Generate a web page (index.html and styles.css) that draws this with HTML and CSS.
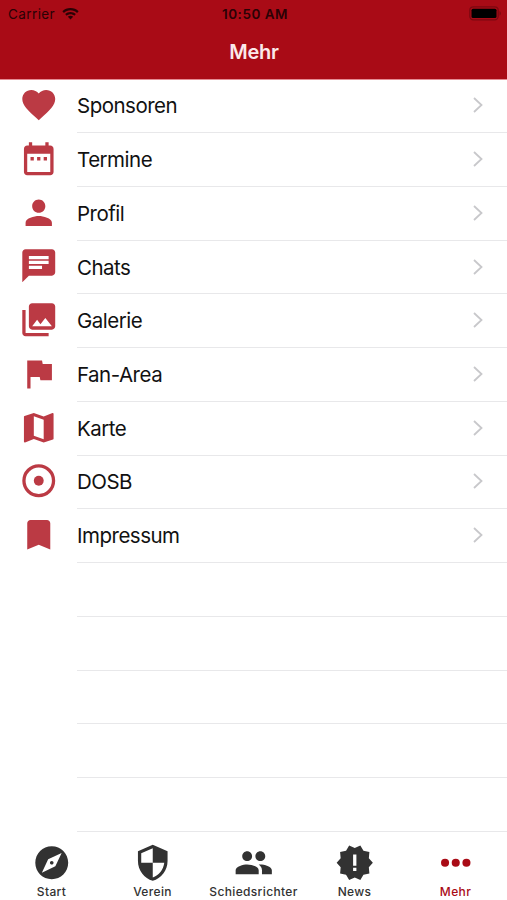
FILE: index.html
```html
<!DOCTYPE html>
<html lang="de">
<head>
<meta charset="utf-8">
<title>Mehr</title>
<link rel="stylesheet" href="styles.css">
</head>
<body>
<header class="header">
  <div class="status">
    <div class="status-left"><span class="carrier">Carrier</span>
      <svg class="wifi" viewBox="0 0 18 13"><path d="M9 0C5.600 0 2.500 1.300.200 3.500l1.700 1.800C3.800 3.500 6.300 2.500 9 2.500s5.200 1 7.100 2.800l1.700-1.800C15.500 1.300 12.400 0 9 0zM9 4.200c-2.200 0-4.300.9-5.800 2.300l1.700 1.800C6 7.300 7.400 6.700 9 6.700s3 .6 4.100 1.600l1.700-1.800C13.300 5.100 11.200 4.200 9 4.200zM9 8.300c-1.100 0-2.100.4-2.900 1.100L9 12.500l2.900-3.100C11.100 8.700 10.100 8.300 9 8.300z"/></svg>
    </div>
    <div class="clock">10:50 AM</div>
    <div class="status-right">
      <svg class="battery" viewBox="0 0 33 15"><rect class="battery-frame" x=".8" y=".8" width="28.400" height="13" rx="3.500"/><rect x="2.500" y="2.700" width="25" height="9.300" rx="1.500"/><path class="battery-tip" d="M30.500 5c1.800.8 1.800 4 0 4.800z"/></svg>
    </div>
  </div>
  <h1 class="title">Mehr</h1>
</header>
<main class="list">
  <div class="row"><svg class="icon" viewBox="0 0 24 24"><path d="M12 21.350l-1.450-1.320C5.400 15.360 2 12.280 2 8.500 2 5.420 4.420 3 7.500 3c1.740 0 3.410.81 4.500 2.090C13.090 3.810 14.760 3 16.500 3 19.580 3 22 5.420 22 8.500c0 3.780-3.400 6.860-8.550 11.540L12 21.350z"/></svg><div class="cell"><span class="label">Sponsoren</span><svg class="chevron" viewBox="0 0 10 16"><path d="M1 1l7.500 7L1 15"/></svg></div></div>
  <div class="row"><svg class="icon" viewBox="0 0 24 24"><path d="M9 11H7v2h2v-2zm4 0h-2v2h2v-2zm4 0h-2v2h2v-2zm2-7h-1V2h-2v2H8V2H6v2H5c-1.110 0-1.990.9-1.990 2L3 20c0 1.100.89 2 2 2h14c1.100 0 2-.9 2-2V6c0-1.100-.9-2-2-2zm0 16H5V9h14v11z"/></svg><div class="cell"><span class="label">Termine</span><svg class="chevron" viewBox="0 0 10 16"><path d="M1 1l7.500 7L1 15"/></svg></div></div>
  <div class="row"><svg class="icon" viewBox="0 0 24 24"><path d="M12 12c2.210 0 4-1.790 4-4s-1.790-4-4-4-4 1.790-4 4 1.790 4 4 4zm0 2c-2.670 0-8 1.340-8 4v2h16v-2c0-2.660-5.330-4-8-4z"/></svg><div class="cell"><span class="label">Profil</span><svg class="chevron" viewBox="0 0 10 16"><path d="M1 1l7.500 7L1 15"/></svg></div></div>
  <div class="row"><svg class="icon" viewBox="0 0 24 24"><path d="M20 2H4c-1.100 0-1.990.9-1.990 2L2 22l4-4h14c1.100 0 2-.9 2-2V4c0-1.100-.9-2-2-2zM6 9h12v2H6V9zm8 5H6v-2h8v2zm4-6H6V6h12v2z"/></svg><div class="cell"><span class="label">Chats</span><svg class="chevron" viewBox="0 0 10 16"><path d="M1 1l7.500 7L1 15"/></svg></div></div>
  <div class="row"><svg class="icon" viewBox="0 0 24 24"><path d="M22 16V4c0-1.100-.9-2-2-2H8c-1.100 0-2 .9-2 2v12c0 1.100.9 2 2 2h12c1.100 0 2-.9 2-2zm-11-4l2.030 2.710L16 11l4 5H8l3-4zM2 6v14c0 1.100.9 2 2 2h14v-2H4V6H2z"/></svg><div class="cell"><span class="label">Galerie</span><svg class="chevron" viewBox="0 0 10 16"><path d="M1 1l7.500 7L1 15"/></svg></div></div>
  <div class="row"><svg class="icon" viewBox="0 0 24 24"><path d="M14.400 6L14 4H5v17h2v-7h5.600l.4 2h7V6z"/></svg><div class="cell"><span class="label">Fan-Area</span><svg class="chevron" viewBox="0 0 10 16"><path d="M1 1l7.500 7L1 15"/></svg></div></div>
  <div class="row"><svg class="icon" viewBox="0 0 24 24"><path d="M20.500 3l-.16.030L15 5.100 9 3 3.360 4.900c-.21.070-.36.250-.36.480V20.500c0 .28.220.5.5.5l.16-.03L9 18.900l6 2.100 5.640-1.900c.21-.07.36-.25.36-.48V3.500c0-.28-.22-.5-.5-.5zM15 19l-6-2.110V5l6 2.110V19z"/></svg><div class="cell"><span class="label">Karte</span><svg class="chevron" viewBox="0 0 10 16"><path d="M1 1l7.500 7L1 15"/></svg></div></div>
  <div class="row"><svg class="icon" viewBox="0 0 24 24"><circle class="ring" cx="12" cy="12" r="9"/><circle cx="12" cy="12" r="3"/></svg><div class="cell"><span class="label">DOSB</span><svg class="chevron" viewBox="0 0 10 16"><path d="M1 1l7.500 7L1 15"/></svg></div></div>
  <div class="row"><svg class="icon" viewBox="0 0 24 24"><path d="M17 3H7c-1.100 0-1.990.9-1.990 2L5 21l7-3 7 3V5c0-1.100-.9-2-2-2z"/></svg><div class="cell"><span class="label">Impressum</span><svg class="chevron" viewBox="0 0 10 16"><path d="M1 1l7.500 7L1 15"/></svg></div></div>
  <div class="row empty"><div class="cell"></div></div>
  <div class="row empty"><div class="cell"></div></div>
  <div class="row empty"><div class="cell"></div></div>
  <div class="row empty"><div class="cell"></div></div>
  <div class="row empty"><div class="cell"></div></div>
</main>
<nav class="tabs">
  <div class="tab"><svg class="tab-icon" viewBox="0 0 24 24"><path d="M12 10.900c-.61 0-1.100.49-1.100 1.100s.49 1.100 1.100 1.100c.61 0 1.100-.49 1.100-1.100s-.49-1.100-1.100-1.100zM12 2C6.480 2 2 6.480 2 12s4.480 10 10 10 10-4.480 10-10S17.520 2 12 2zm2.190 12.190L6 18l3.810-8.190L18 6l-3.810 8.190z"/></svg><span class="tab-label">Start</span></div>
  <div class="tab"><svg class="tab-icon" viewBox="0 0 24 24"><path d="M12 1L3 5v6c0 5.550 3.840 10.740 9 12 5.160-1.260 9-6.450 9-12V5l-9-4zm0 10.990h7c-.53 4.120-3.280 7.790-7 8.940V12H5V6.300l7-3.110v8.800z"/></svg><span class="tab-label">Verein</span></div>
  <div class="tab"><svg class="tab-icon" viewBox="0 0 24 24"><path d="M16 11c1.660 0 2.990-1.340 2.990-3S17.660 5 16 5c-1.660 0-3 1.340-3 3s1.340 3 3 3zm-8 0c1.660 0 2.990-1.340 2.990-3S9.660 5 8 5C6.340 5 5 6.340 5 8s1.340 3 3 3zm0 2c-2.330 0-7 1.170-7 3.500V19h14v-2.500c0-2.330-4.670-3.500-7-3.500zm8 0c-.29 0-.62.020-.97.050 1.160.84 1.970 1.970 1.970 3.450V19h6v-2.500c0-2.330-4.670-3.500-7-3.500z"/></svg><span class="tab-label">Schiedsrichter</span></div>
  <div class="tab"><svg class="tab-icon" viewBox="0 0 24 24"><path d="M23 12l-2.440-2.780.34-3.680-3.610-.82-1.890-3.180L12 3 8.600 1.540 6.710 4.720l-3.610.81.34 3.680L1 12l2.440 2.780-.34 3.690 3.610.82 1.890 3.180L12 21l3.400 1.460 1.890-3.180 3.610-.82-.34-3.680L23 12zm-10 5h-2v-2h2v2zm0-3.200h-2V7h2v6.800z"/></svg><span class="tab-label">News</span></div>
  <div class="tab active"><svg class="tab-icon" viewBox="0 0 24 24"><circle cx="5.500" cy="12" r="2.450"/><circle cx="12" cy="12" r="2.450"/><circle cx="18.500" cy="12" r="2.450"/></svg><span class="tab-label">Mehr</span></div>
</nav>
</body>
</html>
```
FILE: styles.css
```css
* { box-sizing: border-box; }
body {
  margin: 0;
  height: 900px;
  display: flex;
  flex-direction: column;
  overflow: hidden;
  background: #fff;
  color: #111;
  font-family: Inter, "Liberation Sans", sans-serif;
}
svg { display: block; flex: none; }
.header {
  height: 79.6px;
  flex: none;
  background: #a90b16;
  border-bottom: 1px solid #e58c93;
}
.status {
  height: 27px;
  display: grid;
  grid-template-columns: 1fr auto 1fr;
  align-items: center;
  padding: 0 5px 0 8px;
  color: #2a0205;
  font-size: 13.5px;
}
.status-left { display: flex; align-items: center; gap: 7px; }
.carrier { letter-spacing: .4px; }
.wifi { width: 17px; height: 12px; fill: #2a0205; }
.clock { font-weight: 600; letter-spacing: .5px; }
.status-right { display: flex; justify-content: flex-end; }
.battery { width: 33px; height: 15px; fill: #000; }
.battery-frame { fill: none; stroke: #7c0810; stroke-width: 1.3; }
.battery-tip { fill: #7c0810; }
.title {
  margin: 0;
  padding-left: 1px;
  line-height: 51px;
  text-align: center;
  color: #fbe9ea;
  font-size: 20px;
  font-weight: 600;
  letter-spacing: -.2px;
}
.list { height: 752.4px; flex: none; }
.row {
  height: 53.73px;
  display: flex;
  align-items: center;
  padding-left: 19px;
}
.row.empty { padding-left: 77px; }
.icon {
  width: 39.5px;
  height: 39.5px;
  margin: 0 18.5px 3px 0;
  fill: #bb3a44;
}
.ring { fill: none; stroke: #bb3a44; stroke-width: 2; }
.cell {
  flex: 1;
  height: 100%;
  display: flex;
  align-items: center;
  justify-content: space-between;
  padding-right: 24px;
  border-bottom: 1px solid #e8e8ea;
}
.label {
  padding-top: 1px;
  font-size: 20.5px;
  line-height: 26px;
  letter-spacing: -.5px;
}
.chevron {
  width: 10px;
  height: 16px;
  margin-bottom: 1px;
  fill: none;
  stroke: #c8c8cb;
  stroke-width: 1.8;
}
.tabs {
  flex: 1;
  display: grid;
  grid-template-columns: repeat(5, 1fr);
  padding: 11.4px 1px 0;
  color: #323232;
}
.tab { display: flex; flex-direction: column; align-items: center; }
.tab-icon { width: 39.5px; height: 39.5px; fill: currentColor; }
.tab-label {
  margin-top: 1px;
  font-size: 12px;
  line-height: 15px;
  font-weight: 500;
  letter-spacing: .35px;
}
.active { color: #a90b16; }
```
